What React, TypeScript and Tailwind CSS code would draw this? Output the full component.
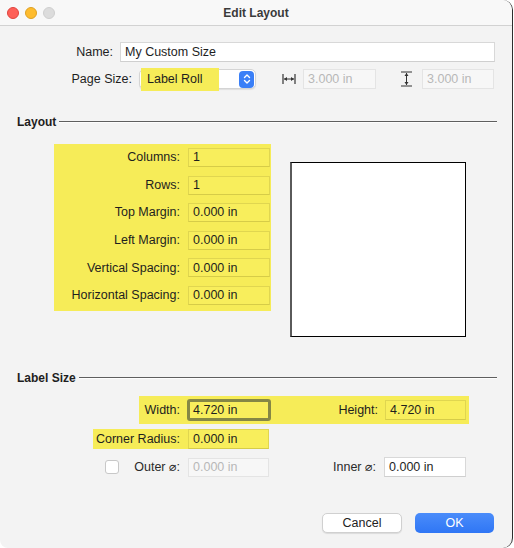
import React from "react";

const Y = "bg-[#f6ec58]";

function Field({ value, w, h = 19, disabled = false, yellow = false }: { value: string; w: number; h?: number; disabled?: boolean; yellow?: boolean }) {
  const cls = disabled
    ? "bg-[#f7f7f7] border-[#e4e4e4] text-[#b8b8b8]"
    : yellow
    ? "bg-[#f8ee5c] border-[#e0d650] border-b-[#d6cc48] text-[#1e1e1e]"
    : "bg-white border-[#d8d8d8] border-b-[#cfcfcf] text-[#1e1e1e]";
  return (
    <div className={`flex items-center border pl-[4px] text-[12.5px] leading-none ${cls}`} style={{ width: w, height: h }}>
      {value}
    </div>
  );
}

function HeadingLine({ title }: { title: string }) {
  return (
    <div className="flex items-center h-[14px] pl-[17px] pr-[15px]">
      <span className="font-bold text-[12px] text-[#1e1e1e] leading-none">{title}</span>
      <div className="flex-1 ml-[3px] border-t border-[#5e5e5e] border-b border-b-[#fdfdfd]" />
    </div>
  );
}

function WidthIcon() {
  return (
    <svg width="14" height="12" viewBox="0 0 14 12" className="text-[#333]">
      <line x1="1" y1="1" x2="1" y2="11" stroke="currentColor" strokeWidth="1.2" />
      <line x1="13" y1="1" x2="13" y2="11" stroke="currentColor" strokeWidth="1.2" />
      <line x1="2" y1="6" x2="12" y2="6" stroke="currentColor" strokeWidth="1" />
      <path d="M2 6 L5 4 L5 8 Z" fill="currentColor" />
      <path d="M12 6 L9 4 L9 8 Z" fill="currentColor" />
    </svg>
  );
}

function HeightIcon() {
  return (
    <svg width="13" height="16" viewBox="0 0 13 16" className="text-[#333]">
      <line x1="1" y1="1" x2="12" y2="1" stroke="currentColor" strokeWidth="1.2" />
      <line x1="1" y1="15" x2="12" y2="15" stroke="currentColor" strokeWidth="1.2" />
      <line x1="6.5" y1="2" x2="6.5" y2="14" stroke="currentColor" strokeWidth="1" />
      <path d="M6.5 2 L4.5 5 L8.5 5 Z" fill="currentColor" />
      <path d="M6.5 14 L4.5 11 L8.5 11 Z" fill="currentColor" />
    </svg>
  );
}

const layoutRows: [string, string][] = [
  ["Columns:", "1"],
  ["Rows:", "1"],
  ["Top Margin:", "0.000 in"],
  ["Left Margin:", "0.000 in"],
  ["Vertical Spacing:", "0.000 in"],
  ["Horizontal Spacing:", "0.000 in"],
];

export default function App() {
  return (
    <div className="w-[514px] h-[548px] bg-white overflow-hidden" style={{ fontFamily: '"Liberation Sans", "DejaVu Sans", sans-serif' }}>
      <div className="w-[513px] h-[548px] bg-[#f3f3f3] rounded-tr-[10px] rounded-br-[10px] rounded-bl-[8px] border-r border-[#2e2e2e] overflow-hidden text-[12.5px] text-[#1e1e1e]">
        {/* Title bar */}
        <div className="h-[26px] bg-[#f8f8f8] border-b border-[#d2d2d2] flex items-center">
          <div className="flex items-center gap-[6px] pl-[7px] w-[70px]">
            <div className="w-[12px] h-[12px] rounded-full bg-[#fe5f57] border border-[#e0443e]" />
            <div className="w-[12px] h-[12px] rounded-full bg-[#febc2e] border border-[#dea123]" />
            <div className="w-[12px] h-[12px] rounded-full bg-[#dcdcdc] border border-[#cfcfcf]" />
          </div>
          <div className="flex-1 text-center font-bold text-[12px] text-[#3a3a3a]">Edit Layout</div>
          <div className="w-[70px]" />
        </div>

        {/* Name */}
        <div className="flex items-center mt-[16px]">
          <div className="w-[113px] text-right">Name:</div>
          <div className="ml-[7px]">
            <Field value="My Custom Size" w={375} h={20} />
          </div>
        </div>

        {/* Page size */}
        <div className="flex items-center mt-[6px] h-[22px]">
          <div className="w-[132px] text-right">Page Size:</div>
          <div className="ml-[7px] w-[117px] h-[20px] bg-white rounded-[5px] border border-[#d4d4d4] shadow-[0_1px_1px_rgba(0,0,0,0.08)] flex items-center">
            <div className={`${Y} ml-[1px] w-[78px] h-[23px] flex items-center pl-[6px]`}>Label Roll</div>
            <div className="flex-1" />
            <div className="mr-[1px] w-[15px] h-[17px] rounded-[4px] bg-[#3a7ff7] flex items-center justify-center">
              <svg width="8" height="12" viewBox="0 0 8 12">
                <path d="M1.5 4.5 L4 2 L6.5 4.5" stroke="white" strokeWidth="1.4" fill="none" strokeLinecap="round" strokeLinejoin="round" />
                <path d="M1.5 7.5 L4 10 L6.5 7.5" stroke="white" strokeWidth="1.4" fill="none" strokeLinecap="round" strokeLinejoin="round" />
              </svg>
            </div>
          </div>
          <div className="ml-[26px]"><WidthIcon /></div>
          <div className="ml-[7px]"><Field value="3.000 in" w={73} h={20} disabled /></div>
          <div className="ml-[24px]"><HeightIcon /></div>
          <div className="ml-[9px]"><Field value="3.000 in" w={72} h={20} disabled /></div>
        </div>

        {/* Layout */}
        <div className="mt-[25px]"><HeadingLine title="Layout" /></div>

        <div className="flex items-start mt-[15px]">
          <div className={`${Y} ml-[54px] w-[217px] h-[167px] pt-[4px] pr-[1px] flex flex-col gap-[8.6px]`}>
            {layoutRows.map(([l, v]) => (
              <div key={l} className="flex items-center">
                <div className="w-[126px] text-right">{l}</div>
                <div className="ml-[8px]"><Field value={v} w={82} yellow /></div>
              </div>
            ))}
          </div>
          <div className="ml-[19px] mt-[18px] w-[176px] h-[175px] bg-white border border-black border-l-2 border-l-[#5a5a5a]" />
        </div>

        {/* Label size */}
        <div className="mt-[34px]"><HeadingLine title="Label Size" /></div>

        <div className={`${Y} ml-[139px] mt-[11px] w-[330px] h-[28px] flex items-center`}>
          <div className="w-[41px] text-right">Width:</div>
          <div className="ml-[7px] w-[84px] h-[22px] rounded-[3px] border-[3px] border-[#858745] bg-[#f8ee5c] flex items-center pl-[3px]">4.720 in</div>
          <div className="w-[107px] text-right">Height:</div>
          <div className="ml-[7px]"><Field value="4.720 in" w={81} h={20} yellow /></div>
        </div>

        <div className="flex items-center mt-[5px]">
          <div className={`${Y} ml-[93px] w-[176px] h-[20px] flex items-center`}>
            <div className="w-[87px] text-right whitespace-nowrap">Corner Radius:</div>
            <div className="ml-[8px]"><Field value="0.000 in" w={81} h={20} yellow /></div>
          </div>
        </div>

        <div className="flex items-center mt-[8px] ml-[105px]">
          <div className="w-[14px] h-[14px] rounded-[3px] bg-white border border-[#c8c8c8]" />
          <div className="w-[61px] text-right text-[#2a2a2a]">Outer ⌀:</div>
          <div className="ml-[8px]"><Field value="0.000 in" w={81} disabled /></div>
          <div className="w-[107px] text-right text-[#2a2a2a]">Inner ⌀:</div>
          <div className="ml-[8px]"><Field value="0.000 in" w={82} h={20} /></div>
        </div>

        {/* Buttons */}
        <div className="flex justify-end items-center mt-[36px] pr-[18px] gap-[13px]">
          <div className="w-[80px] h-[20px] rounded-[5px] bg-white border border-[#d0d0d0] shadow-[0_1px_1px_rgba(0,0,0,0.1)] flex items-center justify-center text-[12.5px] text-[#222]">Cancel</div>
          <div className="w-[79px] h-[20px] rounded-[5px] bg-gradient-to-b from-[#4a8cfa] to-[#2f76f5] flex items-center justify-center text-[12.5px] text-white">OK</div>
        </div>
      </div>
    </div>
  );
}
